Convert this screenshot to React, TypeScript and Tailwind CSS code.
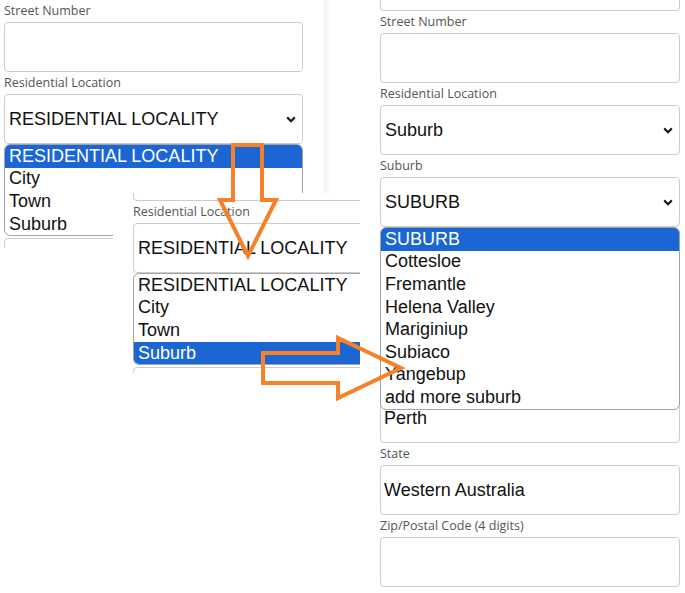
import type { ReactNode } from 'react';

type Option = { text: string; active?: boolean };

const Label = ({ children }: { children?: ReactNode }) => (
  <div className="h-[22px] flex items-center text-[12.5px] leading-none text-[#555] font-['Open_Sans',sans-serif]">
    {children}
  </div>
);

const Box = ({ children }: { children?: ReactNode }) => (
  <div className="h-[50px] w-full flex items-center pl-[3px] border border-[#cdcdcd] rounded-[4px] text-[18px] text-[#111]">
    {children}
  </div>
);

const Chevron = () => (
  <svg width="10" height="7" viewBox="0 0 10 7" className="shrink-0">
    <path d="M1.2 1.4 L5 5.2 L8.8 1.4" fill="none" stroke="#1a1a1a" strokeWidth="2.2" />
  </svg>
);

const Select = ({ value, options }: { value: string; options?: Option[] }) => (
  <div className="relative">
    <div className="h-[50px] w-full flex items-center justify-between pl-[4px] pr-[6px] border border-[#cdcdcd] rounded-[4px] text-[18px] text-[#111]">
      <span>{value}</span>
      <Chevron />
    </div>
    {options && (
      <div className="absolute left-0 right-0 top-full z-10 bg-white border border-[#a3a3a3] rounded-[6px] overflow-hidden">
        {options.map((o) => (
          <div
            key={o.text}
            className={`h-[22.6px] flex items-center pl-[4px] text-[18px] ${
              o.active ? 'bg-[#1b66d2] text-white' : 'text-[#111]'
            }`}
          >
            {o.text}
          </div>
        ))}
      </div>
    )}
  </div>
);

// label is left blank for fields that sit under an open list
const Field = ({ label = '', children }: { label?: string; children?: ReactNode }) => (
  <div className="flex flex-col">
    <Label>{label}</Label>
    {children}
  </div>
);

const localities = ['RESIDENTIAL LOCALITY', 'City', 'Town', 'Suburb'];

const suburbs: Option[] = [
  { text: 'SUBURB', active: true },
  { text: 'Cottesloe' },
  { text: 'Fremantle' },
  { text: 'Helena Valley' },
  { text: 'Mariginiup' },
  { text: 'Subiaco' },
  { text: 'Yangebup' },
  { text: 'add more suburb' },
];

export default function App() {
  return (
    <div className="relative w-[685px] h-[593px] bg-white overflow-hidden font-['Liberation_Sans',Arial,sans-serif]">
      {/* first shot: locality dropdown opened */}
      <div className="absolute z-[1] left-0 top-0 w-[330px] h-[248px] flex overflow-hidden bg-white">
        <div className="w-[303px] pl-[4px] flex flex-col">
          <Field label="Street Number">
            <Box />
          </Field>
          <Field label="Residential Location">
            <Select
              value="RESIDENTIAL LOCALITY"
              options={localities.map((t, i) => ({ text: t, active: i === 0 }))}
            />
          </Field>
          <Field>
            <Box />
          </Field>
          <Field>
            <Box />
          </Field>
        </div>
        <div className="flex-1" />
        <div className="w-[6px] h-[193px] bg-gradient-to-r from-[#f1f1f1] to-white" />
      </div>

      {/* second shot: Suburb picked */}
      <div className="absolute z-[2] left-[113px] top-[193px] w-[330px] h-[180px] overflow-hidden bg-white pl-[20px]">
        <div className="w-[300px] flex flex-col">
          <div className="h-[8px] border-x border-b border-[#cdcdcd] rounded-b-[4px]" />
          <Field label="Residential Location">
            <Select
              value="RESIDENTIAL LOCALITY"
              options={localities.map((t) => ({ text: t, active: t === 'Suburb' }))}
            />
          </Field>
          <Field>
            <Box />
          </Field>
          <Field>
            <Box />
          </Field>
        </div>
      </div>

      {/* third shot: suburb list */}
      <div className="absolute z-[3] left-[360px] top-0 w-[325px] h-[593px] bg-white pl-[20px]">
        <div className="w-[300px] flex flex-col">
          <div className="h-[11px] border-x border-b border-[#cdcdcd] rounded-b-[4px]" />
          <Field label="Street Number">
            <Box />
          </Field>
          <Field label="Residential Location">
            <Select value="Suburb" />
          </Field>
          <Field label="Suburb">
            <Select value="SUBURB" options={suburbs} />
          </Field>
          <Field>
            <Box />
          </Field>
          <Field>
            <Box />
          </Field>
          <Field>
            <Box>Perth</Box>
          </Field>
          <Field label="State">
            <Box>Western Australia</Box>
          </Field>
          <Field label="Zip/Postal Code (4 digits)">
            <Box />
          </Field>
        </div>
      </div>

      {/* arrows drawn over the shots */}
      <svg className="absolute inset-0 z-[4] pointer-events-none" width="685" height="593" viewBox="0 0 685 593">
        <path
          d="M233 145 H262 V200 H276 L248 256 L220 200 H233 Z"
          fill="none"
          stroke="#f5822a"
          strokeWidth="4"
        />
        <path
          d="M263 353 H338 V338 L401 368 L338 398 V383 H263 Z"
          fill="none"
          stroke="#f5822a"
          strokeWidth="4"
        />
      </svg>
    </div>
  );
}
